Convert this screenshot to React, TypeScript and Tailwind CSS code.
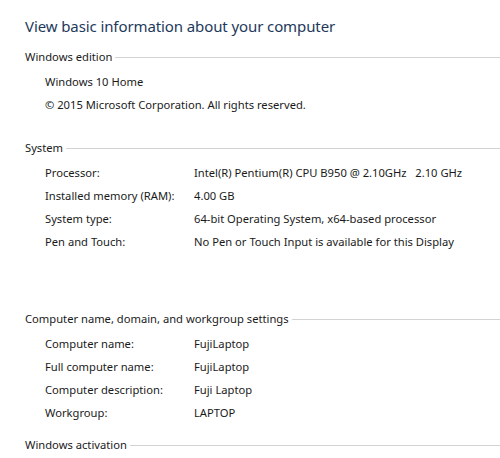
const font = { fontFamily: '"Noto Sans", "Open Sans", sans-serif' }

function Heading({ label, className = "" }: { label: string; className?: string }) {
  return (
    <div className={`flex items-center h-[23px] pl-[25px] ${className}`}>
      <span className="text-[11.2px] text-[#1a1a1a] whitespace-nowrap">{label}</span>
      <div className="flex-1 h-px bg-[#d3d3d3] ml-[3px]" />
    </div>
  )
}

function Row({ label, value }: { label: string; value: string }) {
  return (
    <div className="grid grid-cols-[149px_1fr] items-center h-[23px] pt-[3px] pl-[45px] text-[11.2px] text-[#1a1a1a] whitespace-pre">
      <span>{label}</span>
      <span>{value}</span>
    </div>
  )
}

export default function App() {
  return (
    <div className="w-[500px] h-[458px] bg-white overflow-hidden" style={font}>
      <h1 className="mt-[13px] pl-[25px] text-[15px] leading-[26px] tracking-[-0.1px] text-[#1e395b]">
        View basic information about your computer
      </h1>

      <Heading label="Windows edition" className="mt-[7px]" />
      <div className="flex items-center h-[23px] pt-[3px] pl-[45px] text-[11.2px] text-[#1a1a1a]">Windows 10 Home</div>
      <div className="flex items-center h-[23px] pt-[3px] pl-[45px] text-[11.2px] text-[#1a1a1a] whitespace-nowrap">
        © 2015 Microsoft Corporation. All rights reserved.
      </div>

      <Heading label="System" className="mt-[22px]" />
      <Row label="Processor:" value="Intel(R) Pentium(R) CPU B950 @ 2.10GHz   2.10 GHz" />
      <Row label="Installed memory (RAM):" value="4.00 GB" />
      <Row label="System type:" value="64-bit Operating System, x64-based processor" />
      <Row label="Pen and Touch:" value="No Pen or Touch Input is available for this Display" />

      <Heading label="Computer name, domain, and workgroup settings" className="mt-[56px]" />
      <Row label="Computer name:" value="FujiLaptop" />
      <Row label="Full computer name:" value="FujiLaptop" />
      <Row label="Computer description:" value="Fuji Laptop" />
      <Row label="Workgroup:" value="LAPTOP" />

      <Heading label="Windows activation" className="mt-[11px]" />
    </div>
  )
}
